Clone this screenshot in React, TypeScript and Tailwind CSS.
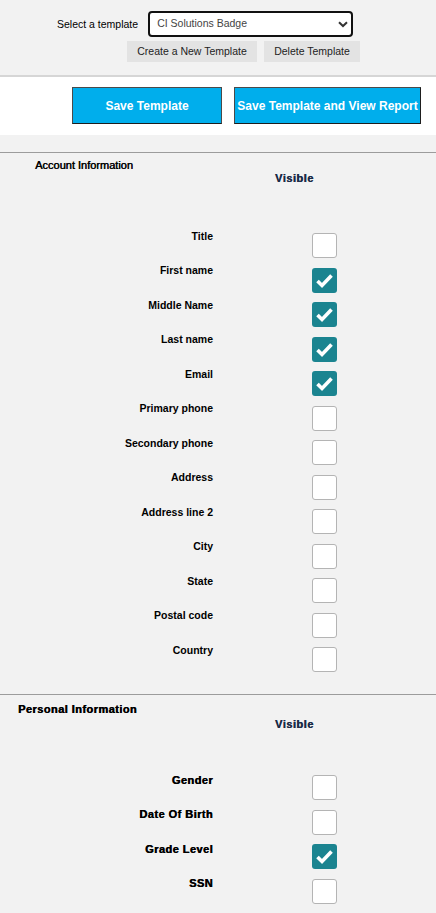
import React from "react"

interface Field {
  label: string
  checked: boolean
}

const accountFields: Field[] = [
  { label: "Title", checked: false },
  { label: "First name", checked: true },
  { label: "Middle Name", checked: true },
  { label: "Last name", checked: true },
  { label: "Email", checked: true },
  { label: "Primary phone", checked: false },
  { label: "Secondary phone", checked: false },
  { label: "Address", checked: false },
  { label: "Address line 2", checked: false },
  { label: "City", checked: false },
  { label: "State", checked: false },
  { label: "Postal code", checked: false },
  { label: "Country", checked: false },
]

const personalFields: Field[] = [
  { label: "Gender", checked: false },
  { label: "Date Of Birth", checked: false },
  { label: "Grade Level", checked: true },
  { label: "SSN", checked: false },
]

function Checkbox({ checked }: { checked: boolean }) {
  if (checked) {
    return (
      <div className="w-[25px] h-[25px] rounded-[3px] bg-[#1b8490] flex items-center justify-center">
        <svg width="25" height="25" viewBox="0 0 25 25" fill="none">
          <path d="M5.5 13 L10 17.5 L19.5 7.5" stroke="white" strokeWidth="3.6" strokeLinejoin="miter" />
        </svg>
      </div>
    )
  }
  return <div className="w-[25px] h-[25px] rounded-[3px] bg-white border-[1.5px] border-[#b4b4b4]" />
}

export default function App() {
  return (
    <div className="min-h-screen w-full bg-[#f2f2f2] text-black font-['Liberation_Sans',Arial,sans-serif]">
      {/* template picker */}
      <div className="pt-[11px] pb-[13px]">
        <div className="flex items-center gap-[10px] pl-[57px]">
          <span className="text-[10.5px] leading-[13px]">Select a template</span>
          <div className="relative w-[205px] h-[26px] bg-white border-2 border-[#111] rounded-[4px] flex items-center pl-[7px] text-[10.5px] text-[#444]">
            CI Solutions Badge
            <svg className="absolute right-[3px] top-[8px]" width="10" height="7" viewBox="0 0 10 7" fill="none">
              <path d="M1 1.2 L5 5 L9 1.2" stroke="#333" strokeWidth="2" />
            </svg>
          </div>
        </div>
        <div className="flex gap-[7px] pl-[127px] mt-[4px]">
          <button className="w-[130px] h-[21px] bg-[#e3e3e3] text-[10.5px] text-[#222]">Create a New Template</button>
          <button className="w-[96px] h-[21px] bg-[#e3e3e3] text-[10.5px] text-[#222]">Delete Template</button>
        </div>
      </div>
      <div className="h-[2px] bg-[#d6d6d6]" />

      {/* save actions */}
      <div className="h-[58px] bg-white flex items-start gap-[12px] pl-[72px] pt-[10px]">
        <button className="w-[150px] h-[37px] bg-[#00aeec] border border-[#4a4a4a] border-b-[#1e1e1e] text-white text-[12px] font-bold">
          Save Template
        </button>
        <button className="w-[187px] h-[37px] bg-[#00aeec] border border-[#4a4a4a] border-b-[#1e1e1e] border-r-[#1e1e1e] text-white text-[12px] font-bold">
          Save Template and View Report
        </button>
      </div>
      <div className="h-[17px]" />

      {/* account information */}
      <div className="border-t border-[#9c9c9c] pb-[16px]">
        <div className="pl-[35px] pt-[6px] text-[11px] leading-[13px] [text-shadow:0.45px_0_0_#000]">Account Information</div>
        <div className="pl-[275px] text-[11px] leading-[13px] font-bold tracking-[0.5px] text-[#1b2c48] [text-shadow:0.35px_0_0_#1b2c48]">
          Visible
        </div>
        <div className="pt-[44.5px]">
          {accountFields.map((f) => (
            <div key={f.label} className="h-[34.5px] flex items-start">
              <div className="w-[213px] text-right text-[10.5px] leading-[13px] font-bold">{f.label}</div>
              <div className="ml-[99px] mt-[3.5px]">
                <Checkbox checked={f.checked} />
              </div>
            </div>
          ))}
        </div>
      </div>

      {/* personal information */}
      <div className="border-t border-[#9c9c9c] pb-[12px]">
        <div className="pl-[18px] pt-[7.5px] text-[11px] leading-[13px] font-bold tracking-[0.45px] [text-shadow:0.4px_0_0_#000]">
          Personal Information
        </div>
        <div className="pl-[275px] mt-[2px] text-[11px] leading-[13px] font-bold tracking-[0.5px] text-[#1b2c48] [text-shadow:0.35px_0_0_#1b2c48]">
          Visible
        </div>
        <div className="pt-[43px]">
          {personalFields.map((f) => (
            <div key={f.label} className="h-[34.5px] flex items-start">
              <div className="w-[213px] text-right text-[11px] leading-[13px] font-bold tracking-[0.45px] [text-shadow:0.4px_0_0_#000]">
                {f.label}
              </div>
              <div className="ml-[99px] mt-[1.5px]">
                <Checkbox checked={f.checked} />
              </div>
            </div>
          ))}
        </div>
      </div>
    </div>
  )
}
